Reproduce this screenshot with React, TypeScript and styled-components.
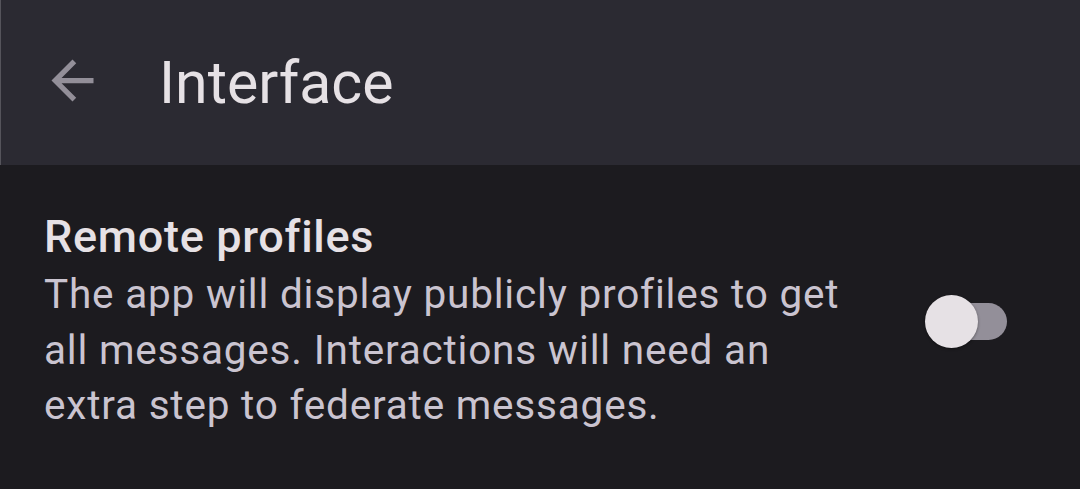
import styled, { createGlobalStyle } from "styled-components"

const GlobalStyle = createGlobalStyle`
    html, body {
        margin: 0;
        padding: 0;
        background: #1c1b1f;
        font-family: Roboto, "Liberation Sans", sans-serif;
    }
`

const Page = styled.div`
    width: 1080px;
    height: 489px;
    background: #1c1b1f;
    overflow: hidden;
`

const TopBar = styled.header`
    height: 165px;
    background: #2b2a32;
    border-left: 1px solid #55545b;
    box-sizing: border-box;
    display: flex;
    align-items: center;
    padding-left: 40px;
`

const BackButton = styled.button`
    width: 63px;
    height: 63px;
    padding: 0;
    border: none;
    background: transparent;
    color: #938f99;
    display: flex;
    align-items: center;
    justify-content: center;
    margin-top: -4px;
`

const Title = styled.h1`
    margin: 0 0 0 55px;
    font-size: 59px;
    font-weight: 400;
    color: #e6e1e5;
    letter-spacing: 0;
`

const Content = styled.div`
    padding-top: 44px;
`

const SettingRow = styled.div`
    display: flex;
    align-items: center;
    padding: 0 73px 0 44px;
`

const TextBlock = styled.div`
    width: 808px;
`

const SettingTitle = styled.div`
    font-size: 45px;
    font-weight: 500;
    color: #e6e1e5;
    line-height: 56px;
    letter-spacing: 0.7px;
    margin-bottom: 2px;
`

const SettingDesc = styled.div`
    font-size: 40.5px;
    color: #cac4d0;
    line-height: 55.5px;
    letter-spacing: 0.8px;
`

const SwitchWrap = styled.div`
    margin-left: auto;
    position: relative;
    width: 82px;
    height: 53px;
`

const Track = styled.div<{ on: boolean }>`
    position: absolute;
    right: 0;
    top: 8px;
    width: 74px;
    height: 37px;
    border-radius: 19px;
    background: ${p => (p.on ? "#d0bcff" : "#938f99")};
`

const Thumb = styled.div<{ on: boolean }>`
    position: absolute;
    top: 0;
    left: ${p => (p.on ? "29px" : "0")};
    width: 53px;
    height: 53px;
    border-radius: 50%;
    background: #e6e1e5;
    box-shadow: 0 1px 3px rgba(0, 0, 0, 0.4);
`

const Switch = ({ on }: { on: boolean }) => (
    <SwitchWrap>
        <Track on={on} />
        <Thumb on={on} />
    </SwitchWrap>
)

const App = () => {
    return (
        <Page>
            <GlobalStyle />
            <TopBar>
                <BackButton aria-label="Back">
                    <svg width="63" height="63" viewBox="0 0 24 24" fill="currentColor">
                        <path d="M20 11H7.83l5.59-5.59L12 4l-8 8 8 8 1.41-1.41L7.83 13H20v-2z" />
                    </svg>
                </BackButton>
                <Title>Interface</Title>
            </TopBar>
            <Content>
                <SettingRow>
                    <TextBlock>
                        <SettingTitle>Remote profiles</SettingTitle>
                        <SettingDesc>
                            The app will display publicly profiles to get all messages. Interactions will need an extra step to federate messages.
                        </SettingDesc>
                    </TextBlock>
                    <Switch on={false} />
                </SettingRow>
            </Content>
        </Page>
    )
}

export default App
